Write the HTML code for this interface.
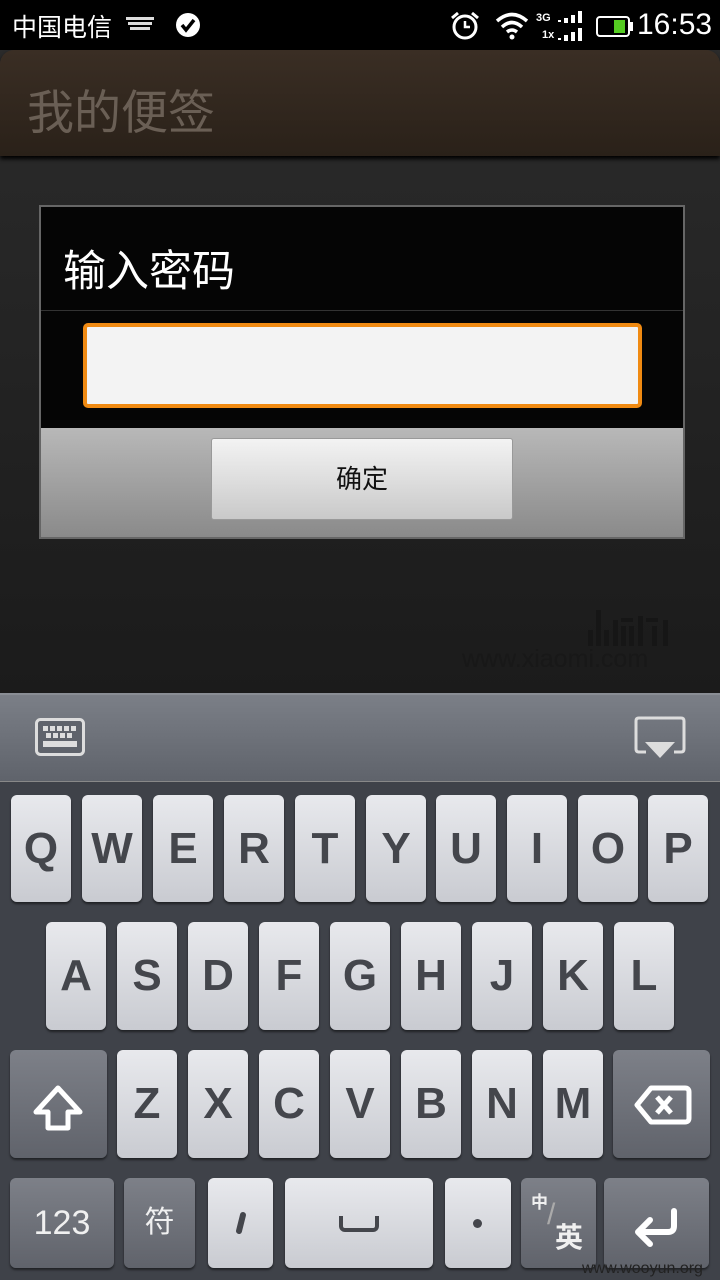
<!DOCTYPE html>
<html><head><meta charset="utf-8"><style>
*{margin:0;padding:0;box-sizing:border-box}
body{width:720px;height:1280px;overflow:hidden;background:#000;position:relative;font-family:"Liberation Sans","Noto Sans CJK SC",sans-serif}
.a{position:absolute}
.k{position:absolute;border-radius:6px;background:linear-gradient(#e8e9ed,#c9cbd1);box-shadow:0 2px 2px rgba(0,0,0,.5);color:#44464c;font-weight:bold;font-size:44px;text-align:center}
.d{position:absolute;border-radius:6px;background:linear-gradient(#7d8088,#60636b);box-shadow:0 2px 2px rgba(0,0,0,.5);color:#f0f0f0;text-align:center}
</style></head><body>
<div class="a" style="left:0;top:0;width:720px;height:50px;background:#000;color:#fff">
<div class="a" style="left:12px;top:8px;font-size:25px">中国电信</div>
<svg class="a" style="left:124px;top:15px" width="32" height="20"><g fill="#ddd"><rect x="2" y="2" width="28" height="3"/><rect x="4" y="7" width="24" height="3"/><rect x="6" y="12" width="20" height="3"/></g></svg>
<svg class="a" style="left:175px;top:12px" width="26" height="26"><circle cx="13" cy="13" r="12" fill="#fff"/><path d="M7 13L11 18L19 8" fill="none" stroke="#000" stroke-width="3.5"/></svg>
<svg class="a" style="left:449px;top:10px" width="32" height="32"><circle cx="16" cy="17" r="11" fill="none" stroke="#fff" stroke-width="3"/><path d="M16 11V17H21" fill="none" stroke="#fff" stroke-width="2.5"/><path d="M3 8L9 3M29 8L23 3" stroke="#fff" stroke-width="3"/></svg>
<svg class="a" style="left:495px;top:10px" width="34" height="30"><path d="M2 11Q17 -2 32 11" fill="none" stroke="#fff" stroke-width="3.5"/><path d="M7 17Q17 8 27 17" fill="none" stroke="#fff" stroke-width="3.5"/><path d="M12 22Q17 18 22 22" fill="none" stroke="#fff" stroke-width="3.5"/><circle cx="17" cy="27" r="2.5" fill="#fff"/></svg>
<div class="a" style="left:536px;top:10px;font-size:11px;font-weight:bold;line-height:16px">3G</div>
<div class="a" style="left:542px;top:27px;font-size:11px;font-weight:bold;line-height:16px">1x</div>
<svg class="a" style="left:556px;top:10px" width="30" height="34"><g fill="#fff"><rect x="2" y="10" width="3" height="2"/><rect x="8" y="8" width="4" height="5"/><rect x="15" y="5" width="4" height="8"/><rect x="22" y="1" width="4" height="12"/><rect x="2" y="28" width="3" height="2"/><rect x="8" y="25" width="4" height="6"/><rect x="15" y="22" width="4" height="9"/><rect x="22" y="18" width="4" height="13"/></g></svg>
<div class="a" style="left:596px;top:16px;width:34px;height:21px;border:2px solid #fff;border-radius:4px"><div class="a" style="left:16px;top:2px;width:11px;height:13px;background:#5c2"></div></div>
<div class="a" style="left:630px;top:22px;width:3px;height:9px;background:#fff"></div>
<div class="a" style="left:637px;top:8px;font-size:30px">16:53</div>
</div>
<div class="a" style="left:0;top:50px;width:720px;height:643px;background:linear-gradient(#2b2b2b,#1b1b1b)"></div>
<div class="a" style="left:0;top:50px;width:720px;height:106px;border-radius:14px 14px 0 0;background:linear-gradient(#3a2e24,#2a2119);box-shadow:0 3px 4px #000"></div>
<div class="a" style="left:27px;top:74px;font-size:47px;color:#6a5f55">我的便签</div>
<div class="a" style="left:39px;top:205px;width:646px;height:334px;border:2px solid #666;background:#050505">
<div class="a" style="left:22px;top:30px;font-size:43px;color:#fff">输入密码</div>
<div class="a" style="left:0;top:103px;width:642px;height:1px;background:#333"></div>
<div class="a" style="left:42px;top:116px;width:559px;height:85px;border:4px solid #f08a12;border-radius:5px;background:#f3f3f3"></div>
<div class="a" style="left:0;top:221px;width:642px;height:109px;background:linear-gradient(#b8b8b8,#8a8a8a)"></div>
<div class="a" style="left:170px;top:231px;width:302px;height:82px;border:1px solid #999;border-radius:3px;background:linear-gradient(#f3f3f3,#c9c9c9);font-size:26px;text-align:center;line-height:80px;color:#111">确定</div>
</div>
<svg class="a" style="left:586px;top:608px" width="86" height="40"><g fill="#161616"><rect x="2" y="22" width="5" height="16"/><rect x="10" y="2" width="5" height="36"/><rect x="18" y="22" width="5" height="16"/><rect x="27" y="12" width="5" height="26"/><rect x="35" y="10" width="12" height="4"/><rect x="35" y="18" width="5" height="20"/><rect x="43" y="18" width="5" height="20"/><rect x="52" y="8" width="5" height="30"/><rect x="60" y="10" width="12" height="4"/><rect x="66" y="18" width="5" height="20"/><rect x="77" y="12" width="5" height="26"/></g></svg>
<div class="a" style="left:462px;top:645px;font-size:25px;color:#181818">www.xiaomi.com</div>
<div class="a" style="left:0;top:693px;width:720px;height:88px;background:linear-gradient(#7b7f87,#5f636b);border-top:2px solid #8a8e95"></div>
<svg class="a" style="left:35px;top:718px" width="50" height="38"><rect x="1.5" y="1.5" width="47" height="35" rx="4" fill="#5f636b" stroke="#ddd" stroke-width="3"/><g fill="#ddd"><rect x="8" y="8" width="5" height="5"/><rect x="15" y="8" width="5" height="5"/><rect x="22" y="8" width="5" height="5"/><rect x="29" y="8" width="5" height="5"/><rect x="36" y="8" width="5" height="5"/><rect x="11" y="15" width="5" height="5"/><rect x="18" y="15" width="5" height="5"/><rect x="25" y="15" width="5" height="5"/><rect x="32" y="15" width="5" height="5"/><rect x="8" y="23" width="34" height="6"/></g></svg>
<svg class="a" style="left:634px;top:716px" width="52" height="44"><path d="M12 36H5Q2 36 2 33V5Q2 2 5 2H47Q50 2 50 5V33Q50 36 47 36H40" fill="none" stroke="#ddd" stroke-width="3"/><path d="M11 26H41L26 42Z" fill="#ddd"/></svg>
<div class="a" style="left:0;top:781px;width:720px;height:499px;background:#3f4249;border-top:1px solid #888"></div>
<div class="k" style="left:11px;top:795px;width:60px;height:107px;line-height:107px">Q</div>
<div class="k" style="left:82px;top:795px;width:60px;height:107px;line-height:107px">W</div>
<div class="k" style="left:153px;top:795px;width:60px;height:107px;line-height:107px">E</div>
<div class="k" style="left:224px;top:795px;width:60px;height:107px;line-height:107px">R</div>
<div class="k" style="left:295px;top:795px;width:60px;height:107px;line-height:107px">T</div>
<div class="k" style="left:366px;top:795px;width:60px;height:107px;line-height:107px">Y</div>
<div class="k" style="left:436px;top:795px;width:60px;height:107px;line-height:107px">U</div>
<div class="k" style="left:507px;top:795px;width:60px;height:107px;line-height:107px">I</div>
<div class="k" style="left:578px;top:795px;width:60px;height:107px;line-height:107px">O</div>
<div class="k" style="left:648px;top:795px;width:60px;height:107px;line-height:107px">P</div>
<div class="k" style="left:46px;top:922px;width:60px;height:108px;line-height:108px">A</div>
<div class="k" style="left:117px;top:922px;width:60px;height:108px;line-height:108px">S</div>
<div class="k" style="left:188px;top:922px;width:60px;height:108px;line-height:108px">D</div>
<div class="k" style="left:259px;top:922px;width:60px;height:108px;line-height:108px">F</div>
<div class="k" style="left:330px;top:922px;width:60px;height:108px;line-height:108px">G</div>
<div class="k" style="left:401px;top:922px;width:60px;height:108px;line-height:108px">H</div>
<div class="k" style="left:472px;top:922px;width:60px;height:108px;line-height:108px">J</div>
<div class="k" style="left:543px;top:922px;width:60px;height:108px;line-height:108px">K</div>
<div class="k" style="left:614px;top:922px;width:60px;height:108px;line-height:108px">L</div>
<div class="d" style="left:10px;top:1050px;width:97px;height:108px"><svg width="97" height="108"><path d="M48 38L26 62H38V78H58V62H70Z" fill="none" stroke="#fff" stroke-width="5" stroke-linejoin="round"/></svg></div>
<div class="k" style="left:117px;top:1050px;width:60px;height:108px;line-height:108px">Z</div>
<div class="k" style="left:188px;top:1050px;width:60px;height:108px;line-height:108px">X</div>
<div class="k" style="left:259px;top:1050px;width:60px;height:108px;line-height:108px">C</div>
<div class="k" style="left:330px;top:1050px;width:60px;height:108px;line-height:108px">V</div>
<div class="k" style="left:401px;top:1050px;width:60px;height:108px;line-height:108px">B</div>
<div class="k" style="left:472px;top:1050px;width:60px;height:108px;line-height:108px">N</div>
<div class="k" style="left:543px;top:1050px;width:60px;height:108px;line-height:108px">M</div>
<div class="d" style="left:613px;top:1050px;width:97px;height:108px"><svg width="97" height="108"><path d="M38 38H72Q76 38 76 42V68Q76 72 72 72H38L24 55Z" fill="none" stroke="#fff" stroke-width="5" stroke-linejoin="round"/><path d="M44 47L58 63M58 47L44 63" stroke="#fff" stroke-width="5"/></svg></div>
<div class="d" style="left:10px;top:1178px;width:104px;height:90px;font-size:34px;line-height:90px">123</div>
<div class="d" style="left:124px;top:1178px;width:71px;height:90px;font-size:30px;line-height:90px">符</div>
<div class="k" style="left:208px;top:1178px;width:65px;height:90px"><svg width="65" height="90"><path d="M35 37L31 53" stroke="#44464c" stroke-width="6" stroke-linecap="round"/></svg></div>
<div class="k" style="left:285px;top:1178px;width:148px;height:90px"><div class="a" style="left:54px;top:38px;width:40px;height:16px;border:4px solid #44464c;border-top:none;border-radius:0 0 6px 6px"></div></div>
<div class="k" style="left:445px;top:1178px;width:66px;height:90px"><div class="a" style="left:28px;top:41px;width:9px;height:9px;border-radius:50%;background:#44464c"></div></div>
<div class="d" style="left:521px;top:1178px;width:75px;height:90px"><span class="a" style="left:10px;top:10px;font-size:17px;font-weight:bold">中</span><span class="a" style="left:26px;top:20px;font-size:30px;color:#aaa">/</span><span class="a" style="left:34px;top:38px;font-size:28px;font-weight:bold">英</span></div>
<div class="d" style="left:604px;top:1178px;width:105px;height:90px"><svg width="105" height="90"><path d="M70 33V48Q70 54 64 54H36M46 42L34 54L46 66" fill="none" stroke="#fff" stroke-width="6" stroke-linecap="round" stroke-linejoin="round"/></svg></div>
<div class="a" style="left:582px;top:1260px;font-size:16px;color:#222">www.wooyun.org</div>
</body></html>
